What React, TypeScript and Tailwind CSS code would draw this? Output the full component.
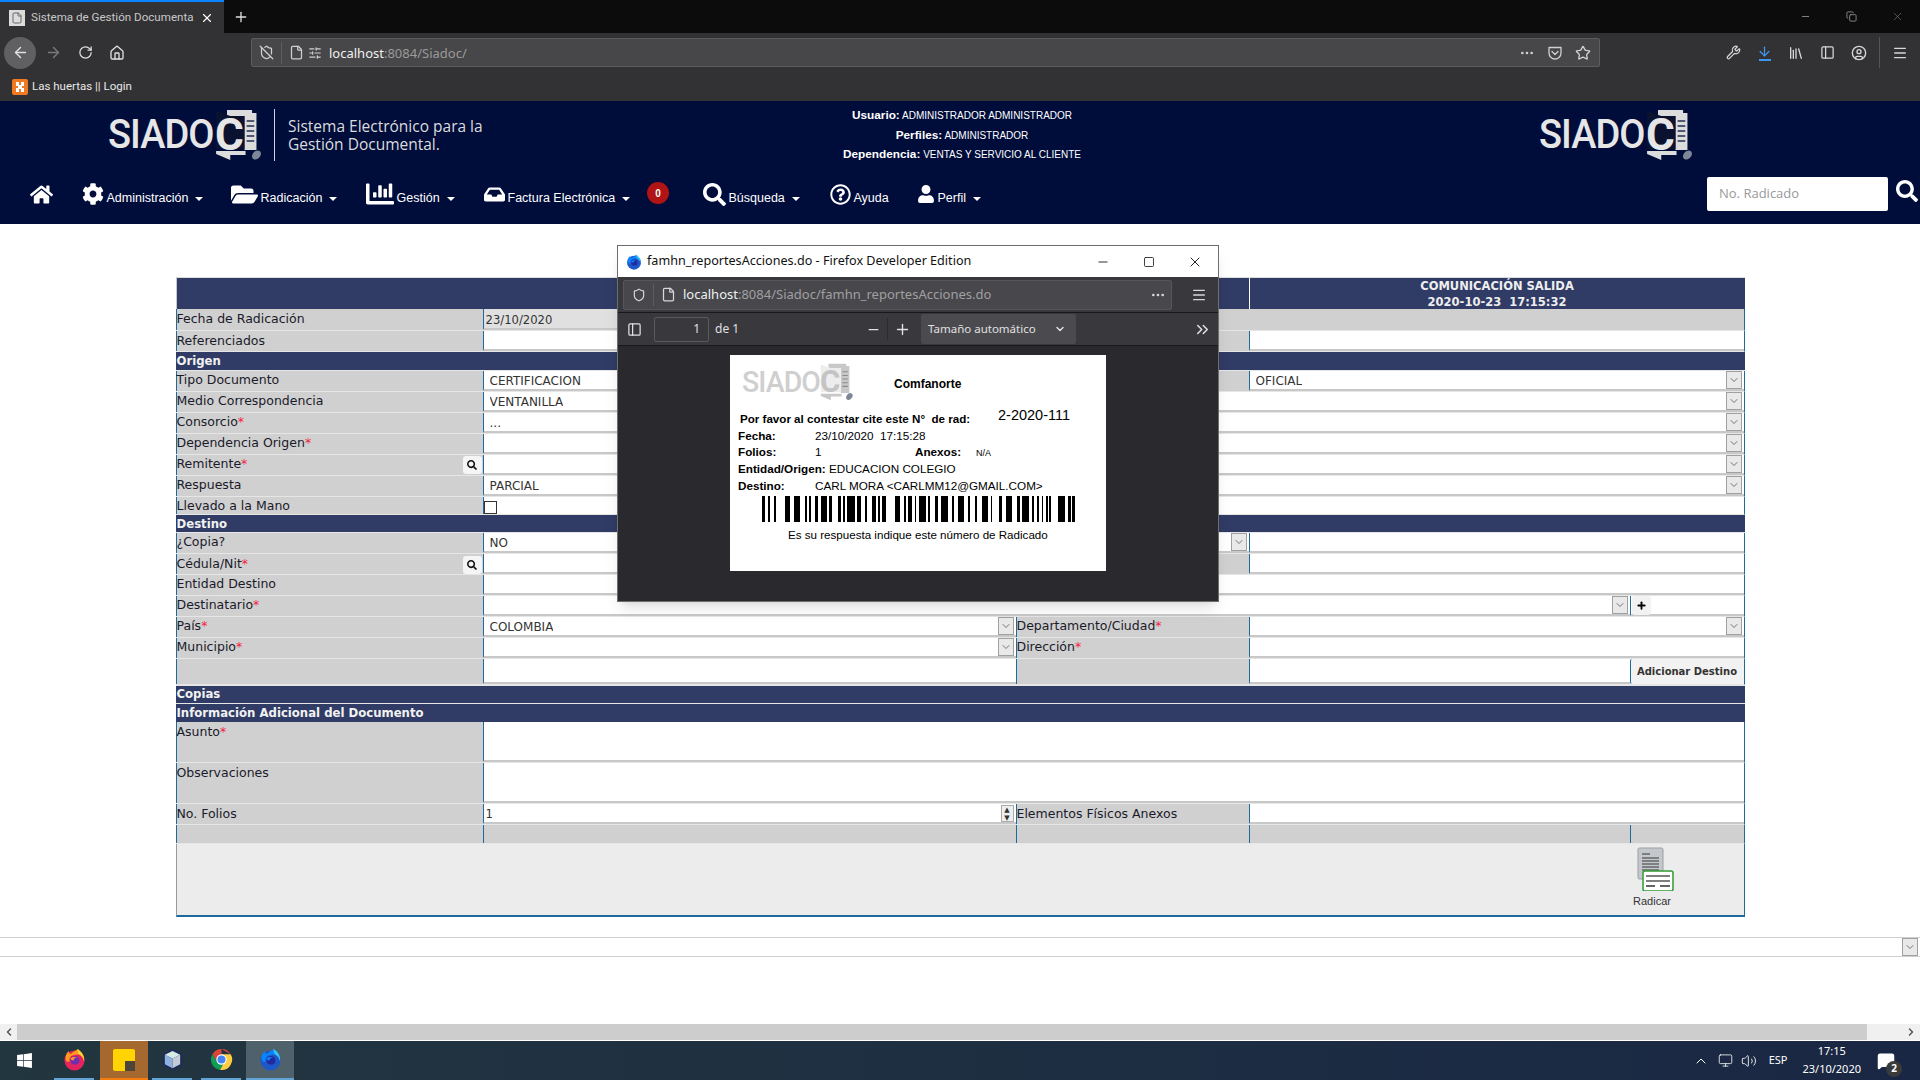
import {
  ArrowDown,
  ArrowLeft,
  ArrowRight,
  ChevronDown,
  ChevronLeft,
  ChevronRight,
  ChevronsRight,
  ChevronUp,
  Copy,
  Ellipsis,
  File,
  Home,
  Library,
  Menu,
  Minus,
  Monitor,
  PanelLeft,
  Plus,
  RotateCw,
  Shield,
  ShieldOff,
  SlidersHorizontal,
  Square,
  Star,
  Volume2,
  Wrench,
  X,
  CircleUser,
  MessageSquare,
} from "lucide-react";
import {
  FaChartBar,
  FaCog,
  FaFolderOpen,
  FaHome,
  FaInbox,
  FaRegQuestionCircle,
  FaSearch,
  FaUser,
  FaWindows,
} from "react-icons/fa";
import type { ReactNode } from "react";

const BARS = [
  [762, 765], [768, 770], [774, 776], [785, 790], [794, 800], [805, 807], [809, 811], [815, 818],
  [821, 827], [829, 832], [838, 841], [843, 845], [847, 855], [857, 861], [865, 867], [872, 876],
  [878, 880], [882, 886], [895, 900], [904, 906], [908, 912], [915, 916], [919, 926], [928, 930],
  [935, 938], [941, 948], [952, 954], [958, 964], [968, 970], [975, 977], [982, 988], [991, 992],
  [999, 1002], [1006, 1012], [1017, 1020], [1022, 1029], [1032, 1034], [1037, 1039], [1042, 1043],
  [1046, 1048], [1049, 1051], [1058, 1065], [1068, 1071], [1072, 1075],
];

function FolderMark({ className, inner, page, ink }: { className: string; inner: string; page: string; ink: string }) {
  return (
    <svg viewBox="0 0 44 52" preserveAspectRatio="none" className={className}>
      <path d="M11 1 L34 1 L34 4 L38 4 L38 41 L27 41 L27 7 L11 7 Z" fill={page} />
      <path d="M29 12 h7 M29 17 h7 M29 22 h7 M29 27 h7 M29 32 h7" stroke={ink} strokeWidth="1.4" />
      <path d="M1 2 L14 7 L27 7 L27 40 L1 40 Z" fill={inner} />
      <path d="M1 42 L28 42 L28 46 L14 46 L14 51 L1 45 Z" fill={page} />
      <ellipse cx="38" cy="46" rx="3.6" ry="5" transform="rotate(35 38 46)" fill="#7d8796" />
    </svg>
  );
}

function Logo() {
  return (
    <div className="relative flex h-[52px] w-[156px] items-center">
      <span className="w-[107px] shrink-0 origin-left scale-x-[0.95] font-['Roboto',sans-serif] text-[40px] leading-none font-medium tracking-[-1px] text-[#e6e6e6]">
        SIADO
      </span>
      <FolderMark className="h-[52px] w-[48px] shrink-0" inner="#0b1230" page="#dcdcdc" ink="#222b4f" />
      <span className="absolute top-[3px] left-[107px] font-['Roboto',sans-serif] text-[44px] leading-[46px] font-bold text-[#e6e6e6]">C</span>
    </div>
  );
}

function PaperLogo() {
  return (
    <div className="relative flex h-[38px] w-[114px] items-center">
      <span className="w-[78px] shrink-0 origin-left scale-x-[0.95] font-['Roboto',sans-serif] text-[30px] leading-none font-medium tracking-[-1px] text-[#cfcfcf]">
        SIADO
      </span>
      <FolderMark className="h-[38px] w-[34px] shrink-0" inner="#ededed" page="#c8c8c8" ink="#8a8a8a" />
      <span className="absolute top-[2px] left-[78px] font-['Roboto',sans-serif] text-[31px] leading-[34px] font-bold text-[#c4c4c4]">C</span>
    </div>
  );
}

function FoxIcon({ dev, className }: { dev?: boolean; className: string }) {
  const a = dev ? "#0a84ff" : "#ff9a1f";
  const b = dev ? "#35c5f5" : "#ffd22e";
  const c = dev ? "#1e57c8" : "#e5245f";
  const d = dev ? "#23299b" : "#6b2fb0";
  return (
    <svg viewBox="0 0 24 24" className={className}>
      <circle cx="12" cy="13" r="10.5" fill={c} />
      <path d="M3 13 C2 8 4 5 6 3 C6 5 7 6 9 6 C11 3 14 3 15 1 C16 3 22 6 22 13 C22 9 18 6 13 7 C8 7 6 11 7 14 C5 15 4 14 3 13 Z" fill={a} />
      <path d="M15 1 C19 3 23 8 22 14 C21 10 19 8 16 6 C16 4 15 3 15 1 Z" fill={b} />
      <circle cx="12.5" cy="13" r="4.6" fill={d} />
      <path d="M8 11 C10 9 13 9 15 10 C12 10 11 12 11 13 C9 13 8 12 8 11 Z" fill={a} />
    </svg>
  );
}

function ChromeIcon() {
  return (
    <svg viewBox="0 0 24 24" className="h-[23px] w-[23px]">
      <path d="M12 1 A11 11 0 0 1 21.6 6.5 L12 6.5 Z M12 1 A11 11 0 0 0 2.5 6.5 L7 14 L12 6.5 L21.6 6.5 Z" fill="#db4437" />
      <path d="M2.5 6.5 A11 11 0 0 0 10.5 22.9 L15 15 L7 14 Z" fill="#0f9d58" />
      <path d="M21.6 6.5 A11 11 0 0 1 10.5 22.9 L16.5 12 L12 6.5 Z" fill="#ffcd40" />
      <circle cx="12" cy="12" r="5.4" fill="#ffffff" />
      <circle cx="12" cy="12" r="4.2" fill="#4285f4" />
    </svg>
  );
}

function PocketIcon() {
  return (
    <svg viewBox="0 0 16 16" className="h-[16px] w-[16px]" fill="none" stroke="currentColor" strokeWidth="1.3">
      <path d="M2 2.5 H14 V8 A6 6 0 0 1 2 8 Z" strokeLinejoin="round" />
      <path d="M5 6.5 L8 9.5 L11 6.5" strokeLinecap="round" strokeLinejoin="round" />
    </svg>
  );
}

function Arrow({ className = "" }: { className?: string }) {
  return (
    <span className={`flex h-[18px] w-4 shrink-0 items-center justify-center border border-[#a0a0a0] bg-[#e9e9e9] text-[#333] ${className}`}>
      <ChevronDown size={12} strokeWidth={1.3} />
    </span>
  );
}

function Label({
  text,
  req,
  w = "w-[307px]",
  search,
  low,
}: {
  text?: string;
  req?: boolean;
  w?: string;
  search?: boolean;
  low?: boolean;
}) {
  return (
    <div className={`flex h-full ${w} shrink-0 justify-between border-l border-[#1c6a9e] bg-[#d0d0d0] text-[12.5px] leading-[18px] text-[#1a1a2a] ${low ? "pt-[1px]" : ""}`}>
      <span>
        {text}
        {req && <span className="text-[#f5223d]">*</span>}
      </span>
      {search && (
        <span className="mt-[1px] mr-[1px] flex h-[18px] w-[19px] items-center justify-center rounded-[3px] bg-[#f5f5f5]">
          <FaSearch size={10} className="text-[#111]" />
        </span>
      )}
    </div>
  );
}

function Field({
  text,
  w = "flex-1",
  arrow,
  gray,
  noLine,
}: {
  text?: string;
  w?: string;
  arrow?: boolean;
  gray?: boolean;
  noLine?: boolean;
}) {
  return (
    <div
      className={`flex h-full ${w} items-center justify-between border-b-2 border-l border-b-[#c8c8c8] border-l-[#1c6a9e] ${gray ? "bg-[#e0e0e0] pl-[2px]" : "bg-white pl-[6px]"} ${noLine ? "border-b-0" : ""} pr-[2px] text-[12px] text-[#333]`}
    >
      <span className={`truncate ${gray ? "pt-[4px] text-[11.6px]" : "pt-[2px]"}`}>{text}</span>
      {arrow && <Arrow />}
    </div>
  );
}

function Row({ h = "h-[21px]", children }: { h?: string; children: ReactNode }) {
  return <div className={`flex ${h} border-r border-b border-r-[#1c6a9e] border-b-[#e6e6e6]`}>{children}</div>;
}

function Section({ text, h = "h-[19px]" }: { text: string; h?: string }) {
  return (
    <div className={`${h} border-b border-[#e6e6e6] bg-[#303c65] pl-[1px] text-[11.7px] leading-[19px] font-bold text-[#f2f2f2]`}>
      {text}
    </div>
  );
}

function NavItem({ icon, label, w, caret = true }: { icon: ReactNode; label: string; w: string; caret?: boolean }) {
  return (
    <div className={`flex ${w} shrink-0 items-center`}>
      <span className="-mt-[4px] flex">{icon}</span>
      <span className="ml-[2.5px] pt-[5px] whitespace-nowrap">{label}</span>
      {caret && <span className="mt-[5px] ml-[7px] h-0 w-0 border-x-[4px] border-t-[4px] border-x-transparent border-t-white" />}
    </div>
  );
}

function TaskItem({ bg, line, children }: { bg?: string; line: string; children: ReactNode }) {
  return (
    <div className={`flex h-full w-[48px] shrink-0 flex-col items-center justify-between ${bg ?? ""}`}>
      <div className="flex flex-1 items-center justify-center">{children}</div>
      <div className={`h-[2px] ${line}`} />
    </div>
  );
}

function Browser() {
  return (
    <div className="font-['Noto_Sans',sans-serif] text-white">
      <div className="flex h-[33px] bg-[#0c0c0c]">
        <div className="flex w-[224px] items-center border-t-2 border-[#0a84ff] bg-[#323234] pl-[9px]">
          <span className="flex h-[16px] w-[16px] shrink-0 items-center justify-center bg-[#dcdcdc]">
            <File size={12} className="text-[#666]" />
          </span>
          <span className="ml-[6px] w-[165px] shrink-0 font-['Roboto',sans-serif] text-[11.6px] whitespace-nowrap text-[#c8c8c8]">Sistema de Gestión Documenta</span>
          <X size={14} className="ml-[4px] shrink-0 text-white" />
        </div>
        <div className="flex w-[34px] items-center justify-center">
          <Plus size={16} className="text-[#ddd]" />
        </div>
        <div className="ml-auto flex items-center text-[#8a8a8a]">
          <span className="flex w-[46px] justify-center"><Minus size={11} /></span>
          <span className="flex w-[46px] justify-center"><Copy size={11} /></span>
          <span className="flex w-[46px] justify-center"><X size={13} strokeWidth={1} /></span>
        </div>
      </div>
      <div className="flex h-[39px] items-center bg-[#323234] pl-[4px] text-[#e0e0e0]">
        <span className="flex h-[32px] w-[32px] items-center justify-center rounded-full bg-[#606062]"><ArrowLeft size={17} /></span>
        <span className="ml-[6px] flex w-[22px] justify-center text-[#7a7a7a]"><ArrowRight size={17} /></span>
        <span className="ml-[10px] flex w-[22px] justify-center"><RotateCw size={15} /></span>
        <span className="ml-[10px] flex w-[22px] justify-center"><Home size={16} /></span>
        <div className="ml-[123px] flex h-[29px] w-[1349px] items-center rounded-[2px] border border-[#5c5c5e] bg-[#474749] pr-[8px] pl-[7px] text-[#d0d0d0]">
          <ShieldOff size={15} />
          <span className="mx-[7px] h-[22px] w-px bg-[#5e5e60]" />
          <File size={15} />
          <SlidersHorizontal size={14} className="ml-[4px]" />
          <span className="ml-[7px] pt-[2px] text-[13px]">
            <span className="text-[#f0f0f0]">localhost</span>
            <span className="text-[#9a9a9a]">:8084/Siadoc/</span>
          </span>
          <span className="ml-auto flex items-center gap-[12px]">
            <Ellipsis size={16} />
            <PocketIcon />
            <Star size={16} />
          </span>
        </div>
        <div className="ml-auto flex items-center pr-[12px] text-[#d8d8d8]">
          <Wrench size={15} className="mr-[16px]" />
          <span className="mr-[16px] flex flex-col items-center text-[#3d97f0]">
            <ArrowDown size={15} />
            <span className="h-[2px] w-[12px] bg-[#3d97f0]" />
          </span>
          <Library size={16} className="mr-[16px]" />
          <PanelLeft size={15} className="mr-[16px]" />
          <CircleUser size={16} className="mr-[12px]" />
          <span className="mr-[12px] h-[31px] w-px bg-[#555]" />
          <Menu size={16} />
        </div>
      </div>
      <div className="flex h-[29px] items-center bg-[#323234] pl-[12px]">
        <svg viewBox="0 0 16 16" className="h-[16px] w-[16px]">
          <rect width="16" height="16" rx="2" fill="#f07a22" />
          <path d="M4 3 h3 v3 h2 v-3 h3 v4 h-2 v2 h2 v4 h-3 v-3 h-2 v3 h-3 v-4 h2 v-2 h-2 Z" fill="#fff" />
        </svg>
        <span className="ml-[4px] pt-[1px] font-['Roboto',sans-serif] text-[11.5px] text-[#e8e8e8]">Las huertas || Login</span>
      </div>
    </div>
  );
}

function SiteHeader() {
  return (
    <div className="h-[123px] bg-[#000c3a] text-white">
      <div className="flex h-[67px] items-start pt-[8px]">
        <div className="flex w-[662px] shrink-0 items-center pl-[108px]">
          <Logo />
          <span className="ml-[10px] h-[52px] w-px bg-[#cfd2dc]" />
          <div className="ml-[13px] font-['Open_Sans',sans-serif] text-[15.5px] leading-[18.5px] text-[#dcdcdc]">
            <div>Sistema Electrónico para la</div>
            <div>Gestión Documental.</div>
          </div>
        </div>
        <div className="-mt-[3px] w-[600px] shrink-0 text-center font-['Liberation_Sans',sans-serif] text-[10px] leading-[19.5px]">
          <div><b className="text-[11.8px]">Usuario:</b> ADMINISTRADOR ADMINISTRADOR</div>
          <div><b className="text-[11.8px]">Perfiles:</b> ADMINISTRADOR</div>
          <div><b className="text-[11.8px]">Dependencia:</b> VENTAS Y SERVICIO AL CLIENTE</div>
        </div>
        <div className="ml-[277px]">
          <Logo />
        </div>
      </div>
      <div className="flex h-[56px] items-center pl-[30px] font-['Liberation_Sans',sans-serif] text-[12.5px]">
        <div className="-mt-[4px] w-[52px] shrink-0"><FaHome size={23} /></div>
        <NavItem w="w-[149px]" label="Administración" icon={<FaCog size={22} />} />
        <NavItem w="w-[135px]" label="Radicación" icon={<FaFolderOpen size={27} />} />
        <NavItem w="w-[118px]" label="Gestión" icon={<FaChartBar size={28} />} />
        <NavItem w="w-[163px]" label="Factura Electrónica" icon={<FaInbox size={21} />} />
        <div className="w-[56px] shrink-0">
          <span className="-mt-[6px] flex h-[22px] w-[22px] items-center justify-center rounded-full bg-[#b01414] text-[10px] font-bold">0</span>
        </div>
        <NavItem w="w-[127px]" label="Búsqueda" icon={<FaSearch size={23} />} />
        <NavItem w="w-[87px]" label="Ayuda" caret={false} icon={<FaRegQuestionCircle size={21} />} />
        <NavItem w="w-[70px]" label="Perfil" icon={<FaUser size={18} />} />
        <div className="ml-auto flex items-center pr-[2px]">
          <div className="-mt-[4px] flex h-[34px] w-[181px] items-center rounded-[2px] bg-white pl-[12px] font-['Open_Sans',sans-serif] text-[13px] text-[#999]">
            No. Radicado
          </div>
          <FaSearch size={22} className="-mt-[10px] ml-[8px]" />
        </div>
      </div>
    </div>
  );
}

function Form() {
  return (
    <div className="mx-auto mt-[53px] w-[1569px] font-['DejaVu_Sans',sans-serif]">
      <div className="flex h-[32px] border-t border-l border-t-[#dcdcdc] border-l-[#c8c8c8] bg-[#303c65] text-[#eeeeee]">
        <div className="w-[1072px] shrink-0" />
        <div className="flex flex-1 flex-col items-center border-l border-white text-[11.5px] leading-[16px] font-bold whitespace-pre">
          <span>COMUNICACIÓN SALIDA</span>
          <span>2020-10-23  17:15:32</span>
        </div>
      </div>
      <Row h="h-[22px]">
        <Label text="Fecha de Radicación" low />
        <Field text="23/10/2020" w="w-[533px]" gray />
        <div className="flex-1 bg-[#d0d0d0]" />
      </Row>
      <Row>
        <Label text="Referenciados" low />
        <Field w="w-[533px]" />
        <div className="w-[233px] bg-[#d0d0d0]" />
        <Field />
      </Row>
      <Section text="Origen" />
      <Row>
        <Label text="Tipo Documento" />
        <Field text="CERTIFICACION" w="w-[533px]" />
        <div className="w-[233px] bg-[#d0d0d0]" />
        <Field text="OFICIAL" arrow />
      </Row>
      <Row><Label text="Medio Correspondencia" /><Field text="VENTANILLA" arrow /></Row>
      <Row><Label text="Consorcio" req /><Field text="..." arrow /></Row>
      <Row><Label text="Dependencia Origen" req /><Field arrow /></Row>
      <Row><Label text="Remitente" req search /><Field arrow /></Row>
      <Row><Label text="Respuesta" /><Field text="PARCIAL" arrow /></Row>
      <Row h="h-[18px]">
        <Label text="Llevado a la Mano" />
        <div className="flex flex-1 items-start border-l border-[#1c6a9e] bg-white pt-[4px]">
          <span className="h-[13px] w-[13px] border border-[#333] bg-white" />
        </div>
      </Row>
      <Section text="Destino" h="h-[18px]" />
      <Row>
        <Label text="¿Copia?" />
        <Field text="NO" w="w-[766px]" arrow />
        <Field />
      </Row>
      <Row>
        <Label text="Cédula/Nit" req search low />
        <Field w="w-[533px]" />
        <div className="w-[233px] bg-[#d0d0d0]" />
        <Field />
      </Row>
      <Row><Label text="Entidad Destino" /><Field /></Row>
      <Row>
        <Label text="Destinatario" req />
        <Field w="w-[1147px]" arrow />
        <div className="flex-1 border-b-2 border-l border-b-[#c8c8c8] border-l-[#1c6a9e] bg-white pl-[1px]">
          <span className="flex h-[19px] w-[19px] items-center justify-center rounded-[3px] bg-[#f2f2f2]">
            <Plus size={11} strokeWidth={4} className="text-black" />
          </span>
        </div>
      </Row>
      <Row>
        <Label text="País" req />
        <Field text="COLOMBIA" w="w-[533px]" arrow />
        <Label text="Departamento/Ciudad" req w="w-[233px]" />
        <Field arrow />
      </Row>
      <Row>
        <Label text="Municipio" req />
        <Field w="w-[533px]" arrow />
        <Label text="Dirección" req w="w-[233px]" />
        <Field />
      </Row>
      <Row h="h-[26px]">
        <Label />
        <Field w="w-[533px]" noLine />
        <Label w="w-[233px]" />
        <Field w="w-[381px]" noLine />
        <div className="flex flex-1 items-center justify-center rounded-[2px] border-l border-[#1c6a9e] bg-[#f2f2f2] text-[10px] font-bold text-[#333]">
          Adicionar Destino
        </div>
      </Row>
      <div className="h-[19px] border-y border-[#e6e6e6] bg-[#303c65] pl-[1px] text-[11.7px] leading-[16px] font-bold text-[#f2f2f2]">Copias</div>
      <div className="h-[18px] bg-[#303c65] pl-[1px] text-[11.7px] leading-[18px] font-bold text-[#f2f2f2]">Información Adicional del Documento</div>
      <Row h="h-[41px]"><Label text="Asunto" req low /><Field /></Row>
      <Row h="h-[41px]"><Label text="Observaciones" low /><Field /></Row>
      <Row>
        <Label text="No. Folios" low />
        <div className="flex w-[533px] items-center justify-between border-b-2 border-l border-b-[#c8c8c8] border-l-[#1c6a9e] bg-white pr-[2px] pl-[2px] text-[11.6px] text-[#333]">
          <span className="pt-[3px]">1</span>
          <span className="flex h-[17px] w-[13px] flex-col border border-[#aaa] bg-[#eee] text-[7px] leading-[8px]">
            <span className="text-center">▲</span>
            <span className="text-center">▼</span>
          </span>
        </div>
        <Label text="Elementos Físicos Anexos" w="w-[233px]" low />
        <Field />
      </Row>
      <Row h="h-[19px]">
        <Label />
        <Label w="w-[533px]" />
        <Label w="w-[233px]" />
        <Label w="w-[381px]" />
        <Label w="flex-1" />
      </Row>
      <div className="flex h-[73px] justify-end border-r border-b-2 border-l border-r-[#1c6a9e] border-b-[#1c6a9e] border-l-[#9a9a9a] bg-[#ececec] pt-[3px] pr-[68px]">
        <div className="flex w-[44px] flex-col items-center">
          <svg viewBox="0 0 40 44" className="h-[44px] w-[40px]">
            <rect x="4" y="1" width="25" height="31" rx="1.5" fill="#c4c8cc" stroke="#9aa0a5" />
            <path d="M8 7 h8 M8 11 h17 M8 14 h17 M8 17 h17 M8 20 h17 M8 23 h17" stroke="#666" strokeWidth="1.6" />
            <rect x="11" y="24" width="30" height="20" rx="2" fill="#fff" stroke="#2f9a35" strokeWidth="1.5" transform="translate(-2 0)" />
            <path d="M12 29 h24 M12 34 h24" stroke="#555" strokeWidth="1.6" />
            <path d="M12 39 h9 M26 39 h10" stroke="#333" strokeWidth="1.5" />
          </svg>
          <span className="mt-[3px] -ml-[3px] font-['Liberation_Sans',sans-serif] text-[11px] leading-[14px] text-[#333]">Radicar</span>
        </div>
      </div>
    </div>
  );
}

function PdfPopup() {
  return (
    <div className="absolute top-[245px] left-[617px] flex h-[357px] w-[602px] flex-col border border-[#6e6e6e] bg-[#2a2a2e] font-['Noto_Sans',sans-serif] shadow-lg">
      <div className="flex h-[31px] shrink-0 items-center bg-white pl-[8px] text-[12.6px] text-[#111]">
        <FoxIcon dev className="h-[16px] w-[16px]" />
        <span className="ml-[5px]">famhn_reportesAcciones.do - Firefox Developer Edition</span>
        <span className="ml-auto flex items-center text-[#111]">
          <span className="flex w-[46px] justify-center"><Minus size={14} strokeWidth={1.5} /></span>
          <span className="flex w-[46px] justify-center"><Square size={12} strokeWidth={1.6} /></span>
          <span className="flex w-[46px] justify-center"><X size={16} strokeWidth={1.4} /></span>
        </span>
      </div>
      <div className="flex h-[36px] shrink-0 items-center border-b border-[#18181a] bg-[#38383d] pl-[5px] text-[#d8d8d8]">
        <div className="flex h-[30px] w-[549px] items-center rounded-[2px] border border-[#55555a] bg-[#47474c] pr-[5px] pl-[8px]">
          <Shield size={14} />
          <span className="mx-[7px] h-[22px] w-px bg-[#5e5e62]" />
          <File size={15} />
          <span className="ml-[7px] text-[13px]">
            <span className="text-[#f0f0f0]">localhost</span>
            <span className="text-[#a0a0a0]">:8084/Siadoc/famhn_reportesAcciones.do</span>
          </span>
          <Ellipsis size={16} className="ml-auto" />
        </div>
        <Menu size={16} className="ml-[19px]" />
      </div>
      <div className="flex h-[33px] shrink-0 items-center border-b border-[#18181a] bg-[#38383d] pl-[9px] text-[12px] text-[#e0e0e0]">
        <PanelLeft size={15} />
        <span className="ml-[12px] flex h-[25px] w-[55px] shrink-0 items-center justify-end rounded-[2px] border border-[#5a5a5e] pr-[8px]">1</span>
        <span className="ml-[6px] w-[22px] shrink-0 whitespace-nowrap">de 1</span>
        <Minus size={15} className="ml-[129px]" />
        <span className="mx-[6px] h-[22px] w-px bg-[#2c2c30]" />
        <Plus size={17} />
        <div className="ml-[10px] flex h-[30px] w-[155px] items-center justify-between rounded-[2px] bg-[#4a4a4f] pr-[10px] pl-[7px] text-[11.5px]">
          <span>Tamaño automático</span>
          <ChevronDown size={12} strokeWidth={3} />
        </div>
        <ChevronsRight size={19} className="ml-[117px]" />
      </div>
      <div className="flex-1 pt-[9px] pl-[112px]">
        <div className="h-[216px] w-[376px] bg-white font-['Liberation_Sans',sans-serif] text-[11.7px] leading-[16.2px] text-black">
          <div className="flex h-[48px] items-center pt-[6px] pl-[12px]">
            <PaperLogo />
            <b className="ml-[38px] translate-y-[2px] text-[12px]">Comfanorte</b>
          </div>
          <div className="flex h-[25px] items-center pt-[7px] pl-[10px]">
            <b className="w-[258px] whitespace-pre text-[11.6px]">Por favor al contestar cite este N°  de rad:</b>
            <span className="-mt-[7px] text-[14.5px]">2-2020-111</span>
          </div>
          <div className="pl-[8px]">
            <div className="flex"><b className="w-[77px]">Fecha:</b><span className="whitespace-pre">23/10/2020  17:15:28</span></div>
            <div className="flex">
              <b className="w-[77px]">Folios:</b>
              <span className="w-[100px]">1</span>
              <b className="w-[61px]">Anexos:</b>
              <span className="pt-[1px] text-[9px]">N/A</span>
            </div>
            <div className="flex"><b className="w-[91px]">Entidad/Origen:</b><span>EDUCACION COLEGIO</span></div>
            <div className="flex"><b className="w-[77px]">Destino:</b><span>CARL MORA &lt;CARLMM12@GMAIL.COM&gt;</span></div>
          </div>
          <svg viewBox="0 0 313 26" className="mt-[2px] ml-[32px] h-[26px] w-[313px]">
            {BARS.map(([a, b]) => (
              <rect key={a} x={a - 762} y="0" width={b - a} height="26" fill="#000" />
            ))}
          </svg>
          <div className="mt-[5px] pl-[58px] text-[11.6px]">Es su respuesta indique este número de Radicado</div>
        </div>
      </div>
    </div>
  );
}

function Taskbar() {
  return (
    <div className="flex h-[40px] shrink-0 border-t border-white bg-linear-to-r from-[#22363f] to-[#1a2744] font-['Noto_Sans',sans-serif] text-white">
      <div className="flex w-[48px] shrink-0 items-center justify-center"><FaWindows size={17} /></div>
      <div className="flex w-[52px] shrink-0 flex-col items-center justify-between">
        <div className="flex flex-1 items-center"><FoxIcon className="h-[23px] w-[23px]" /></div>
        <div className="h-[2px] w-[40px] bg-[#62a4d8]" />
      </div>
      <TaskItem bg="bg-[#a5682f]" line="w-full bg-[#f47b0e]">
        <span className="flex h-[22px] w-[22px] items-end justify-end rounded-[2px] bg-[#ffd400]">
          <span className="h-[10px] w-[10px] bg-[#4d4638]" />
        </span>
      </TaskItem>
      <div className="flex w-[48px] shrink-0 flex-col items-center justify-between">
        <div className="flex flex-1 items-center">
          <svg viewBox="0 0 24 24" className="h-[23px] w-[23px]">
            <path d="M12 1 L22 6 L22 18 L12 23 L2 18 L2 6 Z" fill="#1f2a5c" />
            <path d="M12 3 L20 7 L12 11 L4 7 Z" fill="#d6ebe2" />
            <path d="M4 7 L12 11 L12 21 L4 17 Z" fill="#8fb1e0" />
            <path d="M20 7 L12 11 L12 21 L20 17 Z" fill="#c2cbd6" />
          </svg>
        </div>
        <div className="h-[2px] w-[40px] bg-[#62a4d8]" />
      </div>
      <div className="flex w-[50px] shrink-0 flex-col items-center justify-between">
        <div className="flex flex-1 items-center"><ChromeIcon /></div>
        <div className="h-[2px] w-[40px] bg-[#62a4d8]" />
      </div>
      <TaskItem bg="bg-[#4f626b]" line="w-full bg-[#62a4d8]">
        <FoxIcon dev className="h-[23px] w-[23px]" />
      </TaskItem>
      <div className="ml-auto flex items-center pr-[19px]">
        <ChevronUp size={16} strokeWidth={1.5} className="mr-[9px]" />
        <Monitor size={15} strokeWidth={1.3} className="mr-[8px]" />
        <Volume2 size={16} strokeWidth={1.3} className="mr-[12px]" />
        <span className="mr-[15px] text-[11px]">ESP</span>
        <div className="-mt-[1px] mr-[16px] flex flex-col items-center text-[11px] leading-[18px]">
          <span>17:15</span>
          <span>23/10/2020</span>
        </div>
        <div className="relative mr-[6px]">
          <MessageSquare size={18} fill="#fff" />
          <span className="absolute -right-[7px] -bottom-[7px] flex h-[16px] w-[16px] items-center justify-center rounded-full bg-[#3a3a3a] text-[10px] font-bold">2</span>
        </div>
      </div>
    </div>
  );
}

export default function App() {
  return (
    <div className="relative flex h-screen w-screen flex-col overflow-hidden bg-white">
      <Browser />
      <SiteHeader />
      <div className="flex-1">
        <Form />
        <div className="mt-[20px] flex h-[20px] items-center justify-end border-y border-[#cfcfcf] pr-[2px]">
          <Arrow />
        </div>
      </div>
      <div className="flex h-[16px] shrink-0 bg-[#cdcdcd]">
        <span className="flex w-[17px] items-center justify-center bg-[#f0f0f0] text-[#555]"><ChevronLeft size={12} strokeWidth={3} /></span>
        <span className="ml-auto flex w-[53px] items-center justify-end bg-[#f0f0f0] pr-[3px] text-[#555]"><ChevronRight size={12} strokeWidth={3} /></span>
      </div>
      <Taskbar />
      <PdfPopup />
    </div>
  );
}
